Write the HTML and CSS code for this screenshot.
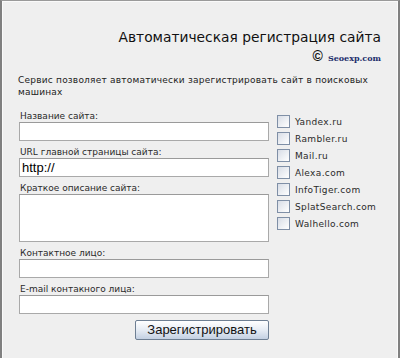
FILE: index.html
```html
<!DOCTYPE html>
<html>
<head>
<meta charset="utf-8">
<link rel="stylesheet" href="styles.css">
</head>
<body>
<div class="frame">
  <div class="inner">
    <div class="header">
      <div class="title">Автоматическая регистрация сайта</div>
      <div class="copy"><span class="c">©</span> <span class="brand">Seoexp.com</span></div>
    </div>
    <div class="desc">Сервис позволяет автоматически зарегистрировать сайт в поисковых машинах</div>
    <div class="main">
      <div class="form">
        <div class="label">Название сайта:</div>
        <div class="input"></div>
        <div class="label">URL главной страницы сайта:</div>
        <div class="input"><span class="val">http://</span></div>
        <div class="label">Краткое описание сайта:</div>
        <div class="input area"></div>
        <div class="label">Контактное лицо:</div>
        <div class="input"></div>
        <div class="label">E-mail контакного лица:</div>
        <div class="input"></div>
        <div class="btnrow"><div class="btn">Зарегистрировать</div></div>
      </div>
      <div class="checks">
        <div class="row"><span class="box"></span><span class="cl">Yandex.ru</span></div>
        <div class="row"><span class="box"></span><span class="cl">Rambler.ru</span></div>
        <div class="row"><span class="box"></span><span class="cl">Mail.ru</span></div>
        <div class="row"><span class="box"></span><span class="cl">Alexa.com</span></div>
        <div class="row"><span class="box"></span><span class="cl">InfoTiger.com</span></div>
        <div class="row"><span class="box"></span><span class="cl">SplatSearch.com</span></div>
        <div class="row"><span class="box"></span><span class="cl">Walhello.com</span></div>
      </div>
    </div>
  </div>
</div>
</body>
</html>
```
FILE: styles.css
```css
html, body {
  margin: 0;
  padding: 0;
  background: #efefef;
}
.frame {
  width: 400px;
  height: 358px;
  box-sizing: border-box;
  border-left: 2px solid #808080;
  border-right: 2px solid #808080;
  border-top: 1px solid #9a9a9a;
  overflow: hidden;
}
.inner {
  height: 100%;
  box-sizing: border-box;
  border-left: 1px solid #fafafa;
  border-right: 1px solid #fafafa;
  border-top: 1px solid #fafafa;
  background: #efefef;
  font-family: "DejaVu Sans", Verdana, sans-serif;
  color: #2a2a2a;
}
.header {
  padding-top: 25px;
  padding-right: 16px;
  text-align: right;
}
.title {
  font-family: "DejaVu Sans", Verdana, sans-serif;
  font-size: 13.8px;
  line-height: 20px;
  color: #111;
}
.copy {
  line-height: 12px;
  margin-top: 3px;
}
.c {
  font-family: "Liberation Sans", Arial, sans-serif;
  font-size: 14px;
  font-weight: bold;
  color: #111;
}
.brand {
  font-family: "DejaVu Serif", serif;
  font-size: 8px;
  font-weight: bold;
  color: #1b2d6b;
}
.desc {
  margin-top: 10px;
  padding-left: 15px;
  padding-right: 14px;
  font-size: 9px;
  line-height: 12px;
  letter-spacing: 0.22px;
  color: #222;
}
.main {
  display: flex;
  margin-top: 8px;
  padding-left: 16px;
}
.form {
  width: 250px;
}
.label {
  padding-left: 1px;
  padding-top: 4px;
  font-size: 9px;
  line-height: 12px;
}
.input {
  height: 19px;
  box-sizing: border-box;
  border: 1px solid #a9a9a9;
  border-top-color: #9a9a9a;
  background: #fff;
  position: relative;
  margin-bottom: 1px;
}
.input.area {
  height: 48px;
}
.val {
  position: absolute;
  left: 2px;
  top: 1px;
  font-family: "Liberation Sans", Arial, sans-serif;
  font-size: 13px;
  line-height: 16px;
  color: #000;
}
.btnrow {
  display: flex;
  justify-content: flex-end;
  margin-top: 6px;
}
.btn {
  width: 134px;
  height: 20px;
  box-sizing: border-box;
  border: 1px solid #6e7f93;
  border-radius: 2px;
  background: linear-gradient(#ffffff, #e6ecf4 50%, #c3d0e2);
  font-family: "Liberation Sans", Arial, sans-serif;
  font-size: 13px;
  line-height: 18px;
  text-align: center;
  color: #111;
}
.checks {
  margin-left: 8px;
  margin-top: 7px;
}
.row {
  display: flex;
  align-items: center;
  height: 17px;
}
.box {
  width: 13px;
  height: 13px;
  box-sizing: border-box;
  border: 1px solid #7f8fa6;
  background: linear-gradient(135deg, #d8dde6, #ffffff);
}
.cl {
  margin-left: 5px;
  font-size: 9px;
  line-height: 12px;
  letter-spacing: 0.35px;
}
```
